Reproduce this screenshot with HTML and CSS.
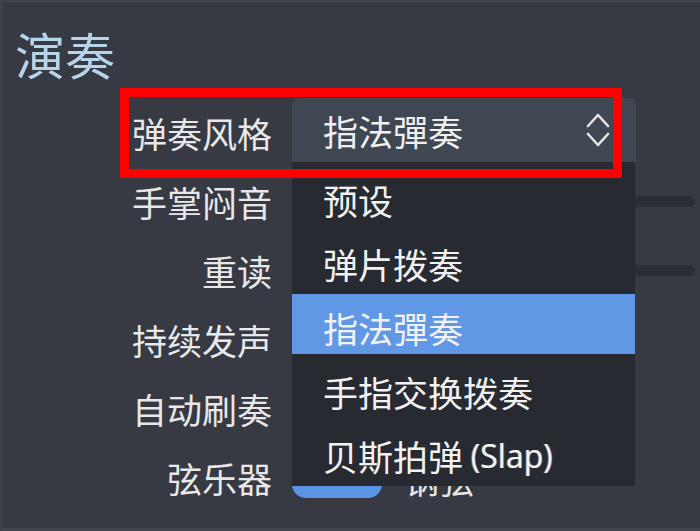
FILE: index.html
```html
<!DOCTYPE html>
<html>
<head>
  <meta charset="utf-8">
  <title>演奏</title>
  <link rel="stylesheet" href="styles.css">
</head>
<body>
  <div id="page">
    <h2 class="title">演奏</h2>

    <div class="form">
      <div class="label">弹奏风格</div>
      <div class="field">
        <div class="combo">
          <span>指法彈奏</span>
          <svg class="chevrons" width="24" height="36" viewBox="0 0 24 36">
            <polyline points="2,14 12,3 22,14" />
            <polyline points="2,22 12,33 22,22" />
          </svg>
          <ul class="popup">
            <li>预设</li>
            <li>弹片拨奏</li>
            <li class="selected">指法彈奏</li>
            <li>手指交换拨奏</li>
            <li>贝斯拍弹 <span class="latin">(Slap)</span></li>
          </ul>
        </div>
      </div>

      <div class="label">手掌闷音</div>
      <div class="field"><div class="track"></div></div>

      <div class="label">重读</div>
      <div class="field"><div class="track"></div></div>

      <div class="label">持续发声</div>
      <div class="field"></div>

      <div class="label">自动刷奏</div>
      <div class="field"></div>

      <div class="label">弦乐器</div>
      <div class="field">
        <div class="segments">
          <div class="segment on"></div>
          <span class="segment-text">钢弦</span>
        </div>
      </div>
    </div>

    <!-- annotation -->
    <div class="mark"></div>
  </div>
</body>
</html>
```

FILE: styles.css
```css
body {
  margin: 0;
  background-color: #373a42;
  font-family: "Noto Sans CJK SC", "Noto Sans", sans-serif;
  color: #e8e8e8;
}

#page {
  position: relative;
  height: 531px;
  box-sizing: border-box;
  border-top: 2px solid #42454c;
  border-left: 3px solid #3e4148;
  border-bottom: 3px solid #42454c;
  padding: 26px 5px 0 0;
  overflow: hidden;
}

.title {
  margin: 0 0 20px 12px;
  font-size: 50px;
  font-weight: normal;
  line-height: 50px;
  color: #b6d4ea;
}

.form {
  display: grid;
  grid-template-columns: 269px 1fr;
  grid-auto-rows: 69px;
  column-gap: 20px;
}

.label {
  font-size: 35px;
  line-height: 69px;
  text-align: right;
}

.field {
  display: flex;
  align-items: center;
}

.combo {
  position: relative;
  align-self: flex-start;
  width: 344px;
  height: 64px;
  box-sizing: border-box;
  padding: 0 26px 0 31px;
  display: flex;
  align-items: center;
  justify-content: space-between;
  background-color: #3e4752;
  border-radius: 6px 6px 0 0;
  font-size: 35px;
  color: #f0f0f0;
}

.chevrons polyline {
  fill: none;
  stroke: #e4e4e4;
  stroke-width: 2.6;
  stroke-linecap: round;
  stroke-linejoin: round;
}

.popup {
  position: absolute;
  top: 100%;
  left: 0;
  z-index: 2;
  width: 343px;
  margin: 0;
  padding: 4px 0 0;
  list-style: none;
  background-color: #272a31;
}

.popup li {
  height: 60px;
  margin-bottom: 4px;
  box-sizing: border-box;
  padding: 6px 0 0 31px;
  display: flex;
  align-items: center;
  font-size: 35px;
  color: #f2f2f2;
  white-space: pre;
}

.popup li.selected {
  background-color: #6198e6;
}

.popup .latin {
  font-family: "Open Sans", "Noto Sans", sans-serif;
  font-size: 32px;
  color: #f4f4f4;
  text-shadow: -1px 0 0 rgba(230, 170, 80, 0.5), 1px 0 0 rgba(90, 150, 255, 0.5);
}

.track {
  width: 100%;
  height: 11px;
  border-radius: 6px;
  background-color: #2b2e35;
}

.segments {
  display: flex;
  align-items: flex-end;
  gap: 22px;
  align-self: flex-end;
  margin-bottom: 14px;
}

.segment {
  width: 90px;
  height: 40px;
  border-radius: 14px;
}

.segment.on {
  background-color: #5b94e4;
}

.segment-text {
  font-size: 35px;
  line-height: 38px;
}

.mark {
  position: absolute;
  left: 117px;
  top: 86px;
  width: 502px;
  height: 90px;
  box-sizing: border-box;
  border: 9px solid #ff0000;
  z-index: 3;
}
```
